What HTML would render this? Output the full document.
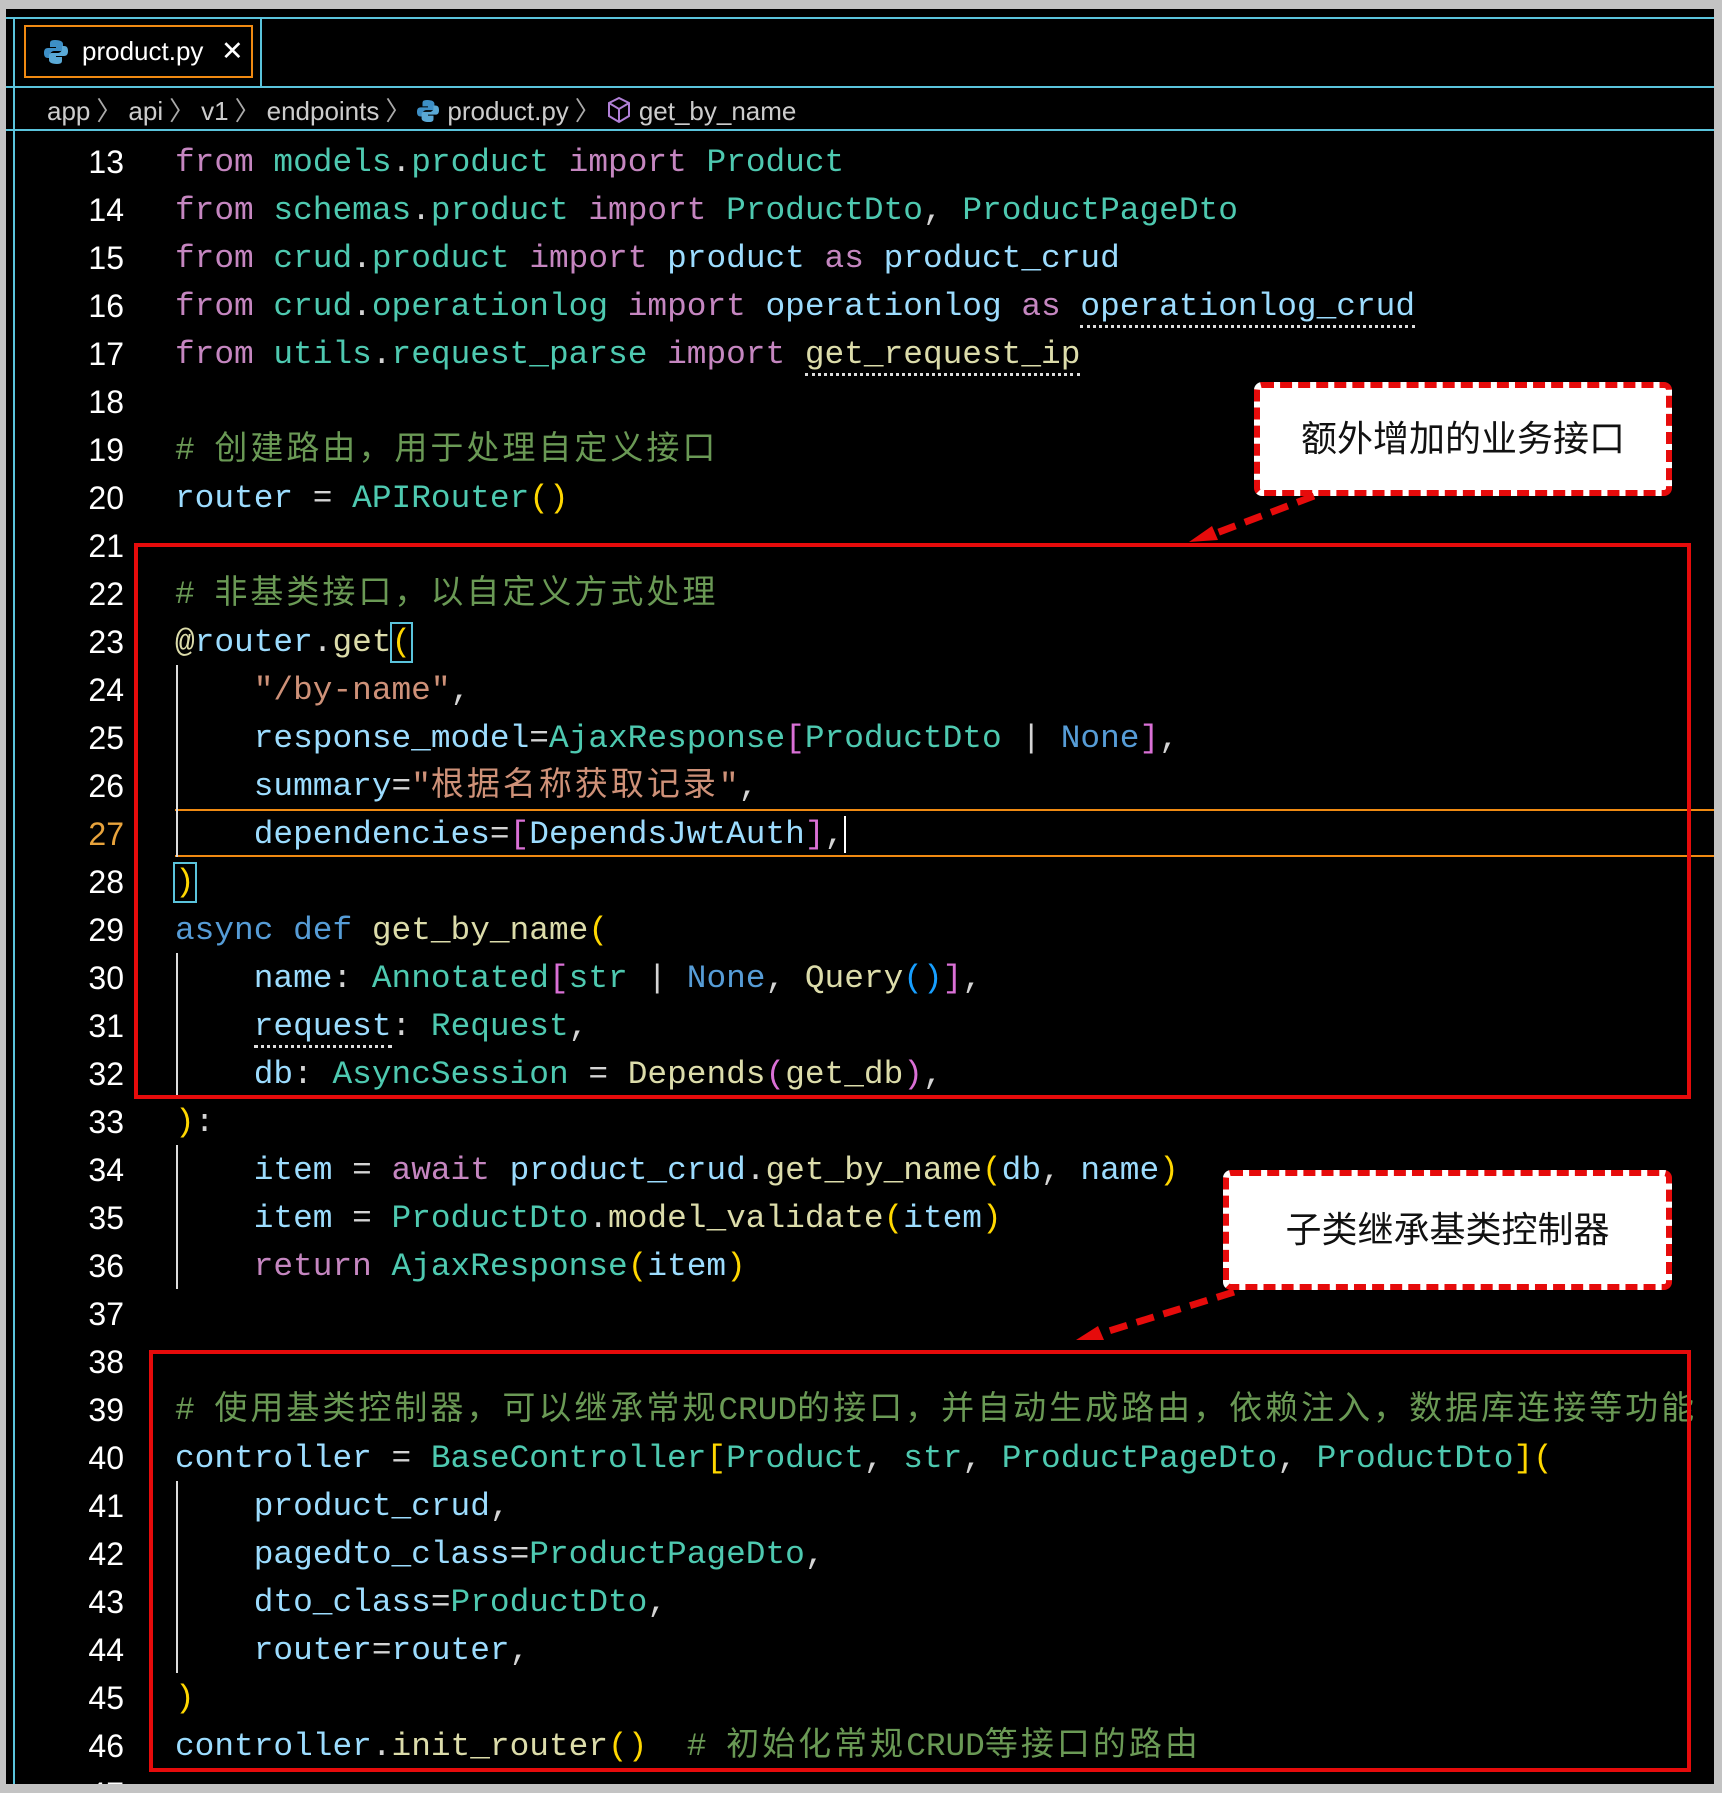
<!DOCTYPE html>
<html><head><meta charset="utf-8">
<style>
*{margin:0;padding:0;box-sizing:border-box}
body{width:1722px;height:1793px;background:#c3c3c3;position:relative;overflow:hidden;font-family:"Liberation Mono","Noto Sans CJK SC",monospace}
#win{position:absolute;left:6px;top:9px;width:1708px;height:1775px;background:#000;overflow:hidden}
.hl{position:absolute;background:#5bc4dc}
#tab{position:absolute;left:18px;top:16px;width:229px;height:53px;border:2px solid #f08a12;color:#fff;font-family:"Liberation Sans",sans-serif;font-size:26px;line-height:49px;padding-left:56px}
#tab .x{position:absolute;left:195px;top:0;font-size:27px}
#bc{position:absolute;left:41px;top:82px;color:#ccc;font-family:"Liberation Sans",sans-serif;font-size:26px;line-height:40px;white-space:nowrap}
#bc .s{color:#aaa;margin:0 6px}
.ln{position:absolute;left:0;width:118px;text-align:right;color:#fff;font-family:"Liberation Sans",sans-serif;font-size:32px;height:48px;line-height:48px;margin-top:1px}
.cl{position:absolute;left:169px;height:48px;line-height:48px;font-size:32.8px;white-space:pre;color:#9cdcfe;margin-top:2px}
.c{font-family:"Noto Sans CJK SC",sans-serif;letter-spacing:3px;font-size:33px;line-height:1}
.k{color:#c586c0}.m{color:#4ec9b0}.v{color:#9cdcfe}.f{color:#dcdcaa}.cm{color:#6a9955}.s{color:#ce9178}.g{color:#ffd700}.p{color:#da70d6}.b{color:#179fff}.bl{color:#569cd6}.w{color:#d4d4d4}
.u{border-bottom:3px dotted #ddd}
.guide{position:absolute;width:2px;background:#ddd}
.box{position:absolute;border:6px dashed #e60b0b;border-radius:8px;background:#fff;color:#111;font-family:"Liberation Sans","Noto Sans CJK SC",sans-serif;font-size:36px;text-align:center}
.rr{position:absolute;border:4px solid #e60b0b}
</style></head><body>
<div id="win">
<div class="hl" style="left:0;top:8px;width:1708px;height:2px"></div>
<div class="hl" style="left:0;top:77px;width:1708px;height:2px"></div>
<div class="hl" style="left:254px;top:8px;width:2px;height:70px"></div>
<div class="hl" style="left:0;top:120px;width:1708px;height:2px"></div>
<div class="hl" style="left:7px;top:8px;width:2px;height:1770px"></div>
<div id="tab"><svg style="position:absolute;left:18px;top:12px" width="24" height="26" viewBox="0 0 24 26"><path d="M11 1c-5 0-5 2-5 4v3h6v1H4c-3 0-4 2-4 5s1 5 4 5h2v-3c0-2 2-4 4-4h6c2 0 3-1 3-3V5c0-2-2-4-8-4z" fill="#3d8fc6"/><path d="M13 25c5 0 5-2 5-4v-3h-6v-1h8c3 0 4-2 4-5s-1-5-4-5h-2v3c0 2-2 4-4 4H8c-2 0-3 1-3 3v4c0 2 2 4 8 4z" fill="#5aa9d6"/></svg>product.py<span class="x">✕</span></div>
<div id="bc">app<span class="s">〉</span>api<span class="s">〉</span>v1<span class="s">〉</span>endpoints<span class="s">〉</span><svg width="22" height="24" viewBox="0 0 24 26" style="vertical-align:-3px;margin-right:8px"><path d="M11 1c-5 0-5 2-5 4v3h6v1H4c-3 0-4 2-4 5s1 5 4 5h2v-3c0-2 2-4 4-4h6c2 0 3-1 3-3V5c0-2-2-4-8-4z" fill="#3d8fc6"/><path d="M13 25c5 0 5-2 5-4v-3h-6v-1h8c3 0 4-2 4-5s-1-5-4-5h-2v3c0 2-2 4-4 4H8c-2 0-3 1-3 3v4c0 2 2 4 8 4z" fill="#5aa9d6"/></svg>product.py<span class="s">〉</span><svg width="24" height="28" viewBox="0 0 24 28" style="vertical-align:-4px;margin-right:8px"><path d="M12 2L22 7v13l-10 6L2 20V7z M2 7l10 6 10-6 M12 13v13" fill="none" stroke="#b180d7" stroke-width="2"/></svg>get_by_name</div>

<div class="ln" style="top:128px">13</div><div class="ln" style="top:176px">14</div><div class="ln" style="top:224px">15</div><div class="ln" style="top:272px">16</div><div class="ln" style="top:320px">17</div><div class="ln" style="top:368px">18</div><div class="ln" style="top:416px">19</div><div class="ln" style="top:464px">20</div><div class="ln" style="top:512px">21</div><div class="ln" style="top:560px">22</div><div class="ln" style="top:608px">23</div><div class="ln" style="top:656px">24</div><div class="ln" style="top:704px">25</div><div class="ln" style="top:752px">26</div><div class="ln" style="top:800px;color:#e8a33c">27</div><div class="ln" style="top:848px">28</div><div class="ln" style="top:896px">29</div><div class="ln" style="top:944px">30</div><div class="ln" style="top:992px">31</div><div class="ln" style="top:1040px">32</div><div class="ln" style="top:1088px">33</div><div class="ln" style="top:1136px">34</div><div class="ln" style="top:1184px">35</div><div class="ln" style="top:1232px">36</div><div class="ln" style="top:1280px">37</div><div class="ln" style="top:1328px">38</div><div class="ln" style="top:1376px">39</div><div class="ln" style="top:1424px">40</div><div class="ln" style="top:1472px">41</div><div class="ln" style="top:1520px">42</div><div class="ln" style="top:1568px">43</div><div class="ln" style="top:1616px">44</div><div class="ln" style="top:1664px">45</div><div class="ln" style="top:1712px">46</div><div class="ln" style="top:1760px">47</div>

<div style="position:absolute;left:169px;top:800px;width:1540px;height:48px;border-top:2px solid #f08a12;border-bottom:2px solid #f08a12"></div>
<div class="guide" style="left:170px;top:656px;height:192px"></div>
<div class="guide" style="left:170px;top:944px;height:144px"></div>
<div class="guide" style="left:170px;top:1136px;height:144px"></div>
<div class="guide" style="left:170px;top:1472px;height:192px"></div>

<div class="cl" style="top:128px"><span class="k">from</span> <span class="m">models</span><span class="w">.</span><span class="m">product</span> <span class="k">import</span> <span class="m">Product</span></div>
<div class="cl" style="top:176px"><span class="k">from</span> <span class="m">schemas</span><span class="w">.</span><span class="m">product</span> <span class="k">import</span> <span class="m">ProductDto</span><span class="w">,</span> <span class="m">ProductPageDto</span></div>
<div class="cl" style="top:224px"><span class="k">from</span> <span class="m">crud</span><span class="w">.</span><span class="m">product</span> <span class="k">import</span> product <span class="k">as</span> product_crud</div>
<div class="cl" style="top:272px"><span class="k">from</span> <span class="m">crud</span><span class="w">.</span><span class="m">operationlog</span> <span class="k">import</span> operationlog <span class="k">as</span> <span class="u">operationlog_crud</span></div>
<div class="cl" style="top:320px"><span class="k">from</span> <span class="m">utils</span><span class="w">.</span><span class="m">request_parse</span> <span class="k">import</span> <span class="f u">get_request_ip</span></div>
<div class="cl" style="top:416px"><span class="cm"># <span class="c">创建路由，用于处理自定义接口</span></span></div>
<div class="cl" style="top:464px">router <span class="w">=</span> <span class="m">APIRouter</span><span class="g">()</span></div>
<div class="cl" style="top:560px"><span class="cm"># <span class="c">非基类接口，以自定义方式处理</span></span></div>
<div class="cl" style="top:608px"><span class="f">@</span>router<span class="w">.</span><span class="f">get</span><span class="g" style="outline:2px solid #5bc4dc">(</span></div>
<div class="cl" style="top:656px">    <span class="s">"/by-name"</span><span class="w">,</span></div>
<div class="cl" style="top:704px">    response_model<span class="w">=</span><span class="m">AjaxResponse</span><span class="p">[</span><span class="m">ProductDto</span> <span class="w">|</span> <span class="bl">None</span><span class="p">]</span><span class="w">,</span></div>
<div class="cl" style="top:752px">    summary<span class="w">=</span><span class="s">"<span class="c">根据名称获取记录</span>"</span><span class="w">,</span></div>
<div class="cl" style="top:800px">    dependencies<span class="w">=</span><span class="p">[</span>DependsJwtAuth<span class="p">]</span><span class="w">,</span><span style="border-left:2px solid #fff"></span></div>
<div class="cl" style="top:848px"><span class="g" style="outline:2px solid #5bc4dc">)</span></div>
<div class="cl" style="top:896px"><span class="bl">async def</span> <span class="f">get_by_name</span><span class="g">(</span></div>
<div class="cl" style="top:944px">    name<span class="w">:</span> <span class="m">Annotated</span><span class="p">[</span><span class="m">str</span> <span class="w">|</span> <span class="bl">None</span><span class="w">,</span> <span class="f">Query</span><span class="b">()</span><span class="p">]</span><span class="w">,</span></div>
<div class="cl" style="top:992px">    <span class="u">request</span><span class="w">:</span> <span class="m">Request</span><span class="w">,</span></div>
<div class="cl" style="top:1040px">    db<span class="w">:</span> <span class="m">AsyncSession</span> <span class="w">=</span> <span class="f">Depends</span><span class="p">(</span><span class="f">get_db</span><span class="p">)</span><span class="w">,</span></div>
<div class="cl" style="top:1088px"><span class="g">)</span><span class="w">:</span></div>
<div class="cl" style="top:1136px">    item <span class="w">=</span> <span class="k">await</span> product_crud<span class="w">.</span><span class="f">get_by_name</span><span class="g">(</span>db<span class="w">,</span> name<span class="g">)</span></div>
<div class="cl" style="top:1184px">    item <span class="w">=</span> <span class="m">ProductDto</span><span class="w">.</span><span class="f">model_validate</span><span class="g">(</span>item<span class="g">)</span></div>
<div class="cl" style="top:1232px">    <span class="k">return</span> <span class="m">AjaxResponse</span><span class="g">(</span>item<span class="g">)</span></div>
<div class="cl" style="top:1376px"><span class="cm"># <span class="c">使用基类控制器，可以继承常规</span>CRUD<span class="c">的接口，并自动生成路由，依赖注入，数据库连接等功能</span></span></div>
<div class="cl" style="top:1424px">controller <span class="w">=</span> <span class="m">BaseController</span><span class="g">[</span><span class="m">Product</span><span class="w">,</span> <span class="m">str</span><span class="w">,</span> <span class="m">ProductPageDto</span><span class="w">,</span> <span class="m">ProductDto</span><span class="g">](</span></div>
<div class="cl" style="top:1472px">    product_crud<span class="w">,</span></div>
<div class="cl" style="top:1520px">    pagedto_class<span class="w">=</span><span class="m">ProductPageDto</span><span class="w">,</span></div>
<div class="cl" style="top:1568px">    dto_class<span class="w">=</span><span class="m">ProductDto</span><span class="w">,</span></div>
<div class="cl" style="top:1616px">    router<span class="w">=</span>router<span class="w">,</span></div>
<div class="cl" style="top:1664px"><span class="g">)</span></div>
<div class="cl" style="top:1712px">controller<span class="w">.</span><span class="f">init_router</span><span class="g">()</span>  <span class="cm"># <span class="c">初始化常规</span>CRUD<span class="c">等接口的路由</span></span></div>

<div class="rr" style="left:128px;top:534px;width:1557px;height:556px"></div>
<div class="rr" style="left:143px;top:1341px;width:1542px;height:422px"></div>
<div class="box" style="left:1248px;top:373px;width:418px;height:114px;line-height:102px">额外增加的业务接口</div>
<div class="box" style="left:1217px;top:1161px;width:449px;height:120px;line-height:108px">子类继承基类控制器</div>
<svg style="position:absolute;left:0;top:0" width="1708" height="1775">
<line x1="1308" y1="487" x2="1200" y2="528" stroke="#e60b0b" stroke-width="7" stroke-dasharray="18,10"/>
<path d="M1183 533 L1206 517 L1212 531 Z" fill="#e60b0b"/>
<line x1="1228" y1="1283" x2="1090" y2="1326" stroke="#e60b0b" stroke-width="7" stroke-dasharray="18,10"/>
<path d="M1070 1331 L1092 1317 L1098 1331 Z" fill="#e60b0b"/>
</svg>
</div>
</body></html>
